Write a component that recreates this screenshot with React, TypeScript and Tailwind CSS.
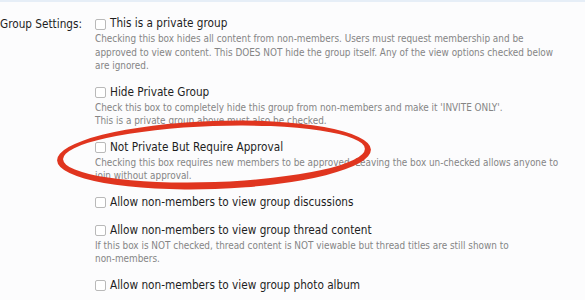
const options = [
  {
    title: 'This is a private group',
    desc: [
      'Checking this box hides all content from non-members. Users must request membership and be',
      'approved to view content. This DOES NOT hide the group itself. Any of the view options checked below',
      'are ignored.',
    ],
  },
  {
    title: 'Hide Private Group',
    desc: [
      "Check this box to completely hide this group from non-members and make it 'INVITE ONLY'.",
      'This is a private group above must also be checked.',
    ],
  },
  {
    title: 'Not Private But Require Approval',
    desc: [
      'Checking this box requires new members to be approved. Leaving the box un-checked allows anyone to',
      'join without approval.',
    ],
  },
  { title: 'Allow non-members to view group discussions', desc: [] },
  {
    title: 'Allow non-members to view group thread content',
    desc: [
      'If this box is NOT checked, thread content is NOT viewable but thread titles are still shown to',
      'non-members.',
    ],
  },
  { title: 'Allow non-members to view group photo album', desc: [] },
];

function Option({ title, desc }: { title: string; desc: string[] }) {
  return (
    <div className="mb-[12px]">
      <label className="flex items-center gap-[4px] h-[16px] text-[11.7px] text-[#1e1e1e] whitespace-nowrap">
        <span className="w-[11px] h-[11px] rounded-[2px] border border-[#b9b9b9] bg-white shrink-0" />
        {title}
      </label>
      {desc.length > 0 && (
        <div className="text-[9.9px] leading-[13.5px] text-[#858585] whitespace-nowrap">
          {desc.map((line) => (
            <div key={line}>{line}</div>
          ))}
        </div>
      )}
    </div>
  );
}

export default function App() {
  return (
    <div className="relative w-[585px] h-[300px] overflow-hidden bg-[#fcfcfd] border-t-2 border-[#e6eef7] [font-family:'DejaVu_Sans_Condensed','DejaVu_Sans',sans-serif]">
      <div className="flex pt-[14px]">
        <div className="w-[95px] shrink-0 pr-[14px] text-right text-[11.7px] h-[16px] leading-[16px] text-[#1e1e1e] whitespace-nowrap">
          Group Settings:
        </div>
        <div className="flex-1">
          {options.map((o) => (
            <Option key={o.title} title={o.title} desc={o.desc} />
          ))}
        </div>
      </div>

      {/* red hand-drawn highlight, thicker along the bottom */}
      <svg className="absolute left-0 top-0 pointer-events-none" width="585" height="300">
        <g transform="rotate(-2 214 153)">
          <path
            fillRule="evenodd"
            fill="#e0351f"
            d="M57 153 a157 34 0 1 0 314 0 a157 34 0 1 0 -314 0 Z M63 152 a151 28 0 1 0 302 0 a151 28 0 1 0 -302 0 Z"
          />
        </g>
      </svg>
    </div>
  );
}
